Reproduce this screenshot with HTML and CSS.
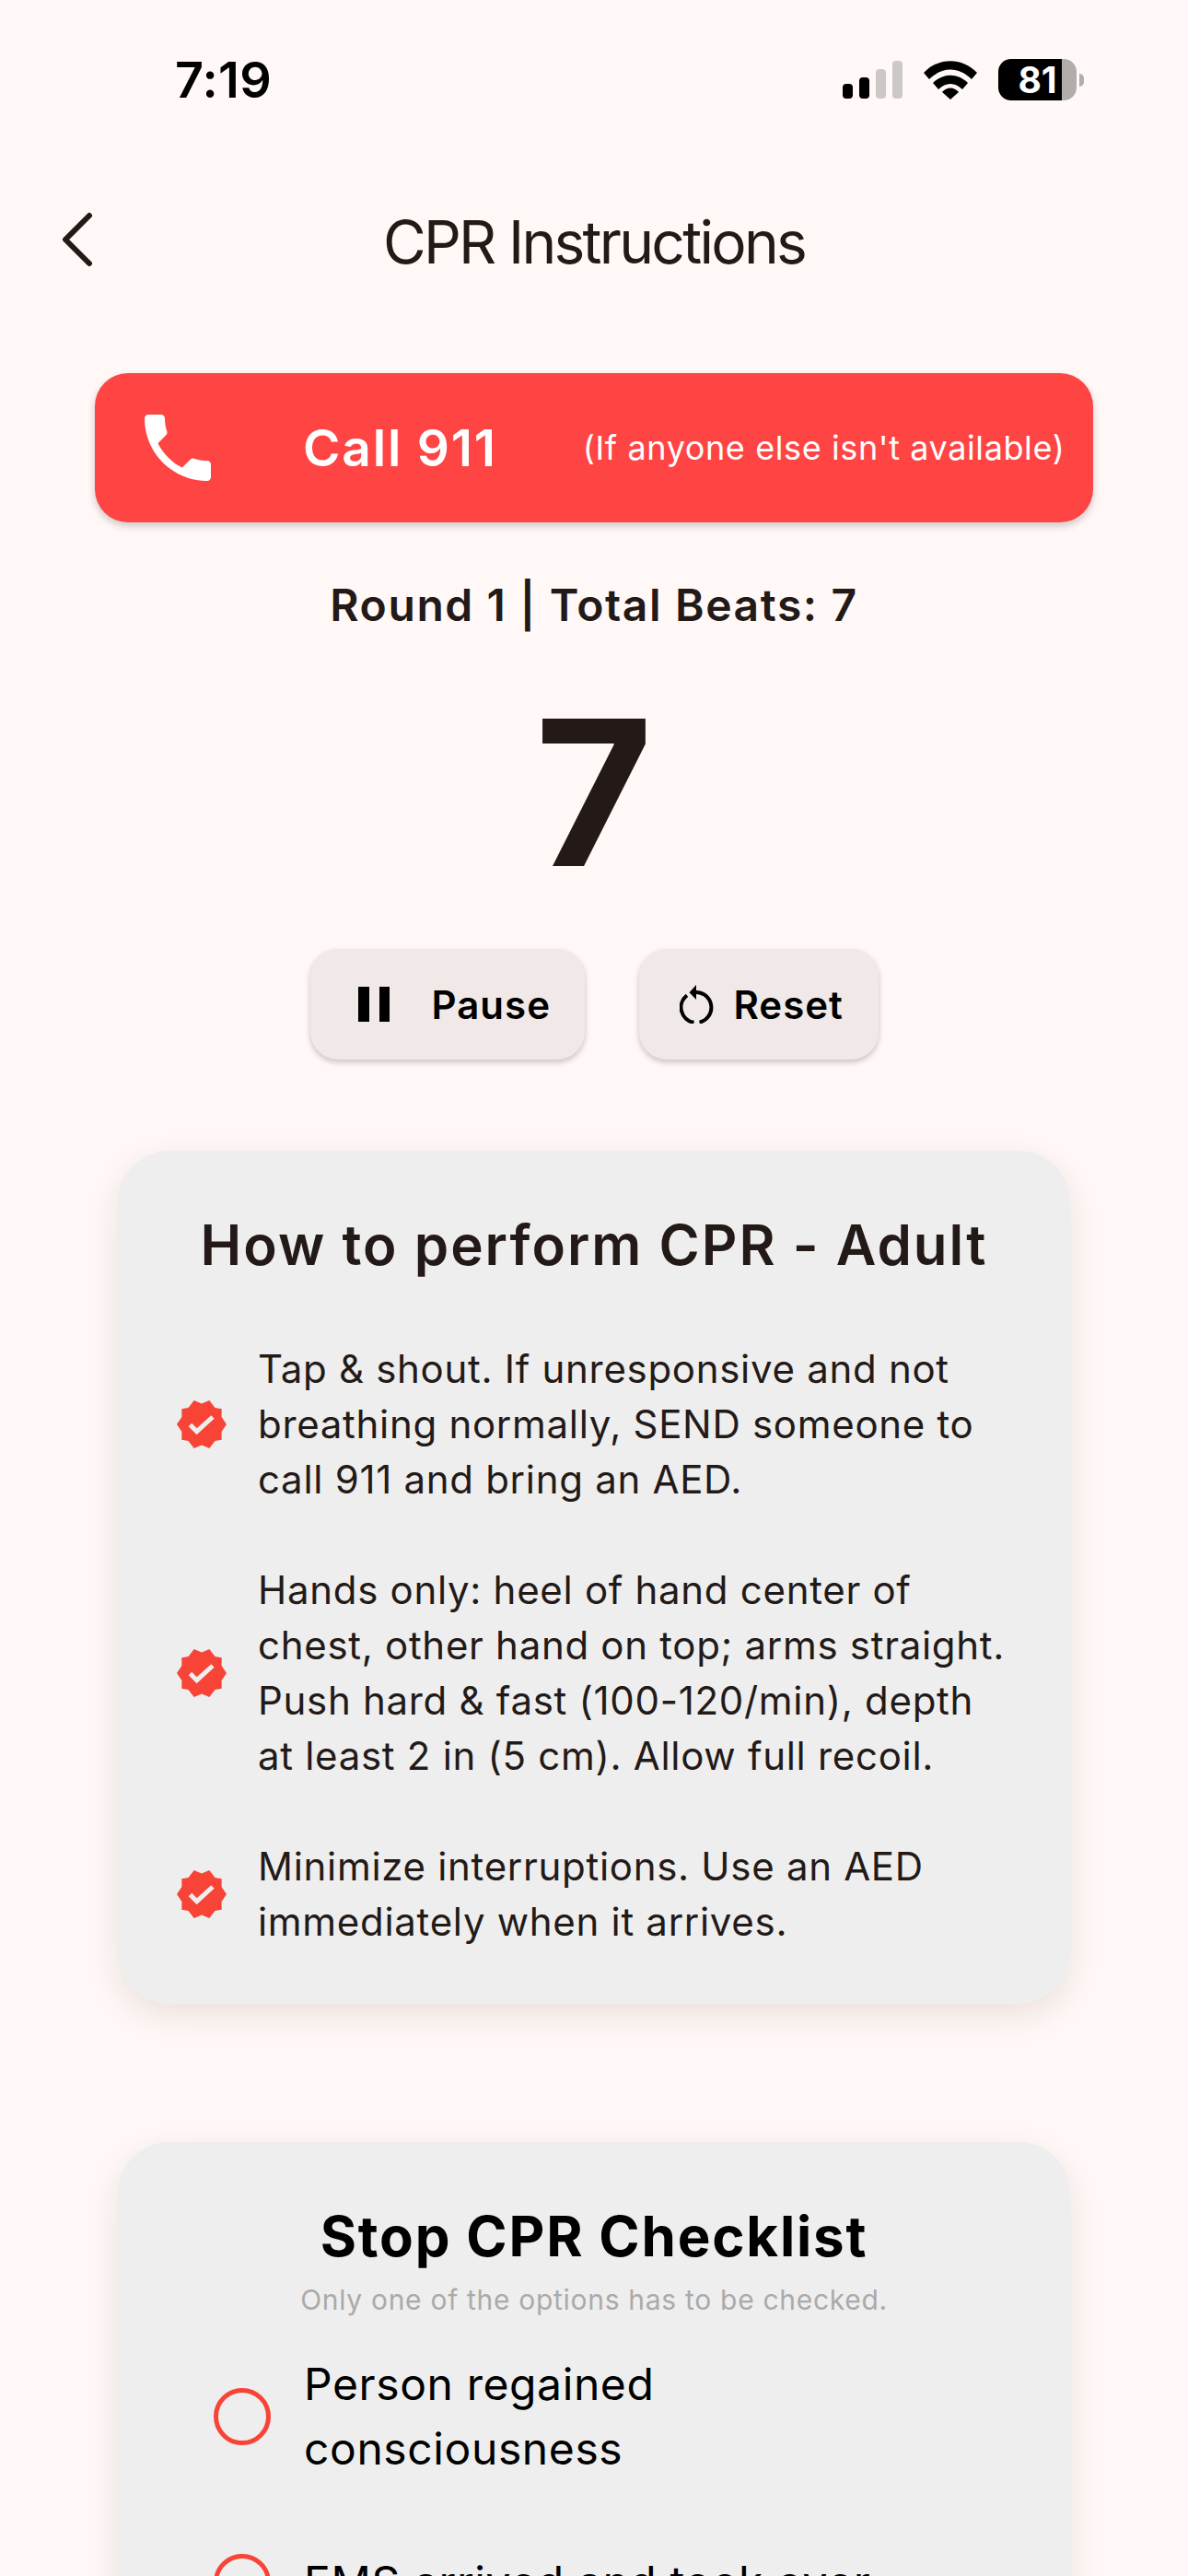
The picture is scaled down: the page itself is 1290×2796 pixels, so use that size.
FILE: index.html
```html
<!DOCTYPE html>
<html lang="en">
<head>
    <meta charset="UTF-8">
    <meta name="viewport" content="width=device-width, initial-scale=1.0">
    <title>CPR Instructions</title>
    <link rel="stylesheet" href="styles.css">
</head>
<body>
    <svg class="defs" width="0" height="0">
        <symbol id="badge" viewBox="0 0 54 52">
            <path d="M18.7 0 L27 3.500 L35.300 0 L41.500 8.100 L48.700 9.300 L48.600 18 L54 26 L48.600 34 L48.700 42.700 L41.500 43.900 L35.300 52 L27 48.500 L18.700 52 L12.500 43.900 L5.300 42.700 L5.400 34 L0 26 L5.400 18 L5.300 9.300 L12.500 8.100 Z" fill="#f74437"/>
            <path d="M14.500 26.500 L21.700 33.700 L39 18" fill="none" stroke="#eee" stroke-width="5"/>
        </symbol>
    </svg>

    <div class="screen">
        <div class="status-bar">
            <span class="time">7:19</span>
            <div class="status-icons">
                <svg width="65" height="41" viewBox="0 0 65 41">
                    <rect x="0" y="25" width="11" height="16" rx="4" fill="#000"/>
                    <rect x="18" y="18" width="11" height="23" rx="4" fill="#000"/>
                    <rect x="36" y="9" width="11" height="32" rx="4" fill="#ccc8c6"/>
                    <rect x="54" y="0" width="11" height="41" rx="4" fill="#ccc8c6"/>
                </svg>
                <svg width="58" height="42" viewBox="0 0 58 42">
                    <path d="M0 13 C16 -4 42 -4 58 13 L52 20 C38 6 20 6 6 20 Z" fill="#000"/>
                    <path d="M10 24 C21 13 37 13 48 24 L42 31 C34 23 24 23 16 31 Z" fill="#000"/>
                    <path d="M20 34 C25 28 33 28 38 34 L29 42 Z" fill="#000"/>
                </svg>
                <div class="battery">
                    <div class="battery-body">
                        <span class="battery-level">81</span>
                    </div>
                    <span class="battery-tip"></span>
                </div>
            </div>
        </div>

        <header class="nav">
            <svg class="back" width="34" height="60" viewBox="0 0 34 60">
                <path d="M30 4 L4 30 L30 56" fill="none" stroke="#231a18" stroke-width="6" stroke-linecap="round" stroke-linejoin="round"/>
            </svg>
            <h1>CPR Instructions</h1>
        </header>

        <main>
            <div class="call-card">
                <svg class="phone" width="96" height="96" viewBox="0 0 24 24">
                    <path d="M6.620 10.790c1.440 2.830 3.760 5.140 6.590 6.590l2.200-2.200c.27-.27.67-.36 1.020-.24 1.120.37 2.330.57 3.570.57.55 0 1 .45 1 1V20c0 .55-.45 1-1 1-9.390 0-17-7.610-17-17 0-.55.45-1 1-1h3.500c.55 0 1 .45 1 1 0 1.250.2 2.450.57 3.570.11.35.03.74-.25 1.020l-2.200 2.200z" fill="#fff"/>
                </svg>
                <span class="call-label">Call 911</span>
                <span class="call-note">(If anyone else isn't available)</span>
            </div>

            <p class="round">Round 1 | Total Beats: 7</p>
            <p class="count">7</p>

            <div class="controls">
                <button class="btn btn-pause">
                    <svg width="34" height="38" viewBox="0 0 34 38">
                        <rect x="0" y="0" width="12" height="38" fill="#000"/>
                        <rect x="23" y="0" width="11" height="38" fill="#000"/>
                    </svg>
                    Pause
                </button>
                <button class="btn btn-reset">
                    <svg width="37" height="42" viewBox="0 0 37 42">
                        <path d="M18 8 A16.500 16.500 0 0 1 21.500 40.600" fill="none" stroke="#000" stroke-width="4"/>
                        <path d="M8 11.400 A16.500 16.500 0 0 0 15.500 40.800" fill="none" stroke="#000" stroke-width="4"/>
                        <path d="M18 0 L18 16 L10.500 8.300 Z" fill="#000"/>
                    </svg>
                    Reset
                </button>
            </div>

            <section class="card howto">
                <h2>How to perform CPR - Adult</h2>
                <ul class="steps">
                    <li>
                        <svg class="badge" width="54" height="52"><use href="#badge"/></svg>
                        <p>Tap &amp; shout. If unresponsive and not breathing normally, SEND someone to call 911 and bring an AED.</p>
                    </li>
                    <li>
                        <svg class="badge" width="54" height="52"><use href="#badge"/></svg>
                        <p>Hands only: heel of hand center of chest, other hand on top; arms straight. Push hard &amp; fast (100-120/min), depth at least 2 in (5 cm). Allow full recoil.</p>
                    </li>
                    <li>
                        <svg class="badge" width="54" height="52"><use href="#badge"/></svg>
                        <p>Minimize interruptions. Use an AED immediately when it arrives.</p>
                    </li>
                </ul>
            </section>

            <section class="card checklist">
                <h2>Stop CPR Checklist</h2>
                <small>Only one of the options has to be checked.</small>
                <ul class="options">
                    <li><span class="radio"></span><p>Person regained consciousness</p></li>
                    <li><span class="radio"></span><p>EMS arrived and took over</p></li>
                </ul>
            </section>
        </main>
    </div>
</body>
</html>
```

FILE: styles.css
```css
* {
    box-sizing: border-box;
    margin: 0;
    padding: 0;
}
html, body {
    height: 2796px;
    overflow: hidden;
}
body {
    font-family: Inter, "Noto Sans", sans-serif;
    background: #fff8f6;
    color: #231a18;
}
.defs {
    display: block;
    height: 0;
}
.screen {
    width: 1290px;
    height: 2796px;
    overflow: hidden;
}

/* Status bar */
.status-bar {
    height: 217px;
    padding: 60px 113px 0 190px;
    display: flex;
    justify-content: space-between;
    align-items: flex-start;
}
.time {
    font-size: 54px;
    line-height: 54px;
    font-weight: 600;
    color: #000;
    letter-spacing: 0.3px;
}
.status-icons {
    display: flex;
    align-items: center;
    gap: 23px;
    padding-top: 4px;
}
.battery {
    display: flex;
    align-items: center;
    gap: 3px;
}
.battery-body {
    width: 85px;
    height: 45px;
    border-radius: 14px;
    overflow: hidden;
    background: linear-gradient(to right, #000 0, #000 81%, #b1adab 81%);
    display: flex;
    align-items: center;
    justify-content: center;
}
.battery-level {
    color: #fff;
    font-size: 39px;
    font-weight: 700;
    line-height: 45px;
}
.battery-tip {
    width: 5px;
    height: 14px;
    background: #b1adab;
    border-radius: 0 5px 5px 0;
}

/* Nav */
.nav {
    height: 90px;
    padding-left: 67px;
    display: grid;
    grid-template-columns: 1fr auto 1fr;
    align-items: center;
}
.back {
    margin-top: -4px;
}
.nav h1 {
    font-size: 64px;
    font-weight: 400;
    letter-spacing: -2.7px;
    color: #231a18;
    margin-left: -67px;
}

/* Call card */
main {
    display: flex;
    flex-direction: column;
    align-items: center;
    padding-top: 98px;
}
.call-card {
    width: 1084px;
    height: 162px;
    background: #ff4444;
    border-radius: 36px;
    box-shadow: 0 4px 8px rgba(0,0,0,0.2);
    display: flex;
    align-items: center;
    color: #fff;
    padding-left: 42px;
}
.phone {
    flex: none;
}
.call-label {
    font-size: 55px;
    font-weight: 600;
    letter-spacing: 1.8px;
    margin-left: 88px;
}
.call-note {
    font-size: 36px;
    margin-left: 93px;
    letter-spacing: 0.6px;
    white-space: nowrap;
}
.round {
    margin-top: 62px;
    font-size: 48px;
    line-height: 56px;
    font-weight: 600;
    letter-spacing: 1.6px;
}
.count {
    font-size: 220px;
    font-weight: 700;
    line-height: 266px;
    margin-top: 42px;
}
.controls {
    margin-top: 37px;
    display: flex;
    gap: 59px;
}
.btn {
    height: 120px;
    border: none;
    border-radius: 30px;
    background: #f1e9e8;
    box-shadow: 0 3px 6px rgba(0,0,0,0.22);
    font-family: inherit;
    font-size: 42px;
    font-weight: 600;
    letter-spacing: 1px;
    color: #000;
    display: flex;
    align-items: center;
}
.btn-pause {
    width: 298px;
    padding-left: 52px;
    gap: 46px;
}
.btn-reset {
    width: 260px;
    padding-left: 44px;
    gap: 22px;
}

/* Cards */
.card {
    width: 1034px;
    background: #eee;
    border-radius: 56px;
    box-shadow: 0 12px 36px rgba(60,30,20,0.1);
}
.howto {
    margin-top: 99px;
    height: 926px;
    padding-top: 68px;
}
.card h2 {
    text-align: center;
    font-size: 60px;
    line-height: 68px;
    font-weight: 600;
    letter-spacing: 2px;
}
.steps {
    list-style: none;
    margin-top: 71px;
    padding: 0 58px 0 64px;
    display: flex;
    flex-direction: column;
    gap: 60px;
}
.steps li {
    display: flex;
    align-items: center;
    gap: 34px;
}
.steps p {
    font-size: 42px;
    line-height: 60px;
    letter-spacing: 0.7px;
    color: #231a18;
}
.badge {
    flex: none;
}
.checklist {
    margin-top: 150px;
    height: 700px;
    padding-top: 68px;
    display: flex;
    flex-direction: column;
    align-items: center;
}
.checklist h2 {
    font-weight: 700;
    color: #000;
    letter-spacing: 1.8px;
}
.checklist small {
    margin-top: 17px;
    font-size: 30px;
    line-height: 36px;
    color: #aaa;
    letter-spacing: 0.7px;
}
.options {
    list-style: none;
    width: 100%;
    margin-top: 39px;
    padding: 0 200px 0 104px;
    display: flex;
    flex-direction: column;
    gap: 75px;
}
.options li {
    display: flex;
    align-items: center;
    gap: 36px;
}
.options p {
    font-size: 48px;
    line-height: 70px;
    letter-spacing: 0.6px;
    color: #000;
}
.radio {
    flex: none;
    width: 62px;
    height: 62px;
    border: 5px solid #f74437;
    border-radius: 50%;
}
```
